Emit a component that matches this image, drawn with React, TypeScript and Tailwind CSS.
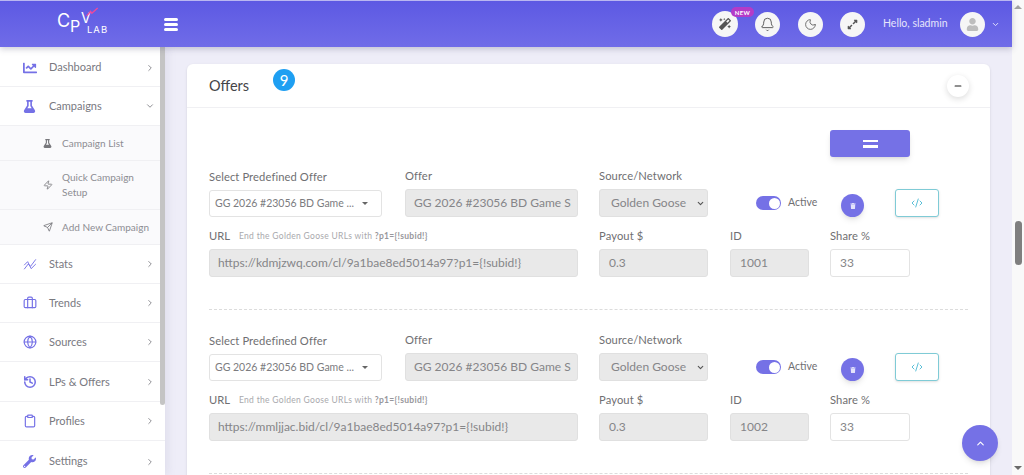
import React from 'react';
import { ChevronRight, ChevronDown, ChevronUp, Bell, Moon, Briefcase, Globe, History, Clipboard, Zap, Send, CodeXml, Minus } from 'lucide-react';
import { FaChartLine, FaFlask, FaWrench, FaMagic, FaExpandAlt, FaUser, FaTrash } from 'react-icons/fa';

const font = "font-['Lato','Noto_Sans',sans-serif]";

const StatsIcon = ({ className }: { className?: string }) => (
    <svg viewBox="0 0 24 24" className={className} fill="none" stroke="currentColor" strokeWidth="1.6">
        <path d="M2 21 L9 12 L13 16 L22 4" />
        <path d="M2 14 L8 8 L14 20 L22 12" />
    </svg>
);

const menuBottom = [
    { label: 'Stats', icon: <StatsIcon className="w-[14px] h-[14px]" />, h: 'h-[39px]' },
    { label: 'Trends', icon: <Briefcase size={14} />, h: 'h-[39px]' },
    { label: 'Sources', icon: <Globe size={14} />, h: 'h-[39px]' },
    { label: 'LPs & Offers', icon: <History size={14} strokeWidth={2.6} />, h: 'h-[40px] pt-px' },
    { label: 'Profiles', icon: <Clipboard size={14} />, h: 'h-[39px]' },
    { label: 'Settings', icon: <FaWrench size={13} />, h: 'h-[40px] pt-[2px]' },
];

const MenuItem = ({ label, icon, open, h }: { label: string; icon: React.ReactNode; open?: boolean; h: string }) => (
    <div className={`${h} shrink-0 flex items-center pl-[23px] pr-[10px] border-b border-[#f0f0f3] text-[#79797f]`}>
        <span className="w-[26px] text-[#7571e6] flex">{icon}</span>
        <span className="text-[11px] flex-1">{label}</span>
        {open ? <ChevronDown size={10} /> : <ChevronRight size={10} />}
    </div>
);

const SubItem = ({ label, icon, h }: { label: string; icon: React.ReactNode; h: string }) => (
    <div className={`${h} flex items-center pl-[43px] pr-2 border-b border-[#f0f0f3] text-[#8d8d93]`}>
        <span className="w-[19px] shrink-0 flex text-[#77777c]">{icon}</span>
        <span className="text-[10px] leading-[15px] w-[90px]">{label}</span>
    </div>
);

const Label = ({ children, className = '' }: { children: React.ReactNode; className?: string }) => (
    <div className={`text-[11.2px] leading-[14px] text-[#6f6f72] tracking-[0.1px] ${className}`}>{children}</div>
);

const Field = ({ value, pad = 'pl-[9px]', off }: { value: string; pad?: string; off?: boolean }) => (
    <div className={`h-[28px] rounded-[3px] border flex items-center overflow-hidden whitespace-nowrap text-[12px] text-[#858588] ${pad} ${off ? 'bg-white border-[#e3e3e3]' : 'bg-[#e9e9e9] border-[#e0e0e0]'}`}>
        {value}
    </div>
);

const OfferBlock = ({ url, id }: { url: string; id: string }) => (
    <div className="flex flex-col">
        <div className="flex">
            <div className="w-[173px] mr-[23px]">
                <Label className="mb-[6px] mt-px">Select Predefined Offer</Label>
                <div className="h-[27px] rounded-[3px] border border-[#e3e3e3] bg-white flex items-center pl-[5px] pr-[13px] text-[10.5px] text-[#7c7c80]">
                    <span className="flex-1 whitespace-nowrap">GG 2026 #23056 BD Game ...</span>
                    <span className="w-0 h-0 border-x-[3px] border-x-transparent border-t-[3px] border-t-[#666]" />
                </div>
            </div>
            <div className="w-[173px] mr-[21px]">
                <Label className="mb-[6px]">Offer</Label>
                <Field value="GG 2026 #23056 BD Game S" pad="pl-[8px]" />
            </div>
            <div className="w-[109px] mr-[48px]">
                <Label className="mb-[6px]">Source/Network</Label>
                <div className="h-[28px] rounded-[3px] border border-[#e0e0e0] bg-[#e9e9e9] flex items-center pl-[11px] pr-[2px] text-[12px] text-[#858588]">
                    <span className="flex-1">Golden Goose</span>
                    <ChevronDown size={9} strokeWidth={3} className="text-[#555]" />
                </div>
            </div>
            <div className="w-[85px] flex items-center h-[28px] mt-[20px]">
                <span className="w-[25px] h-[14px] rounded-full bg-[#7571e6] flex items-center justify-end pr-px mr-[7px]">
                    <span className="w-[11px] h-[11px] rounded-full bg-white" />
                </span>
                <span className="text-[10.5px] text-[#6f6f72]">Active</span>
            </div>
            <div className="w-[54px] mt-[25px]">
                <span className="w-[23px] h-[23px] rounded-full bg-[#7571e6] shadow-md flex items-center justify-center text-[#e4e3fb]">
                    <FaTrash size={6} />
                </span>
            </div>
            <div className="w-[44px] h-[28px] mt-[20px] rounded-[3px] border border-[#7fcbd6] bg-white shadow-sm flex items-center justify-center text-[#5cc0d8]">
                <CodeXml size={12} />
            </div>
        </div>
        <div className="flex mt-[12px]">
            <div className="w-[369px] mr-[21px]">
                <div className="flex items-center h-[14px] mb-[6px]">
                    <span className="text-[11.2px] text-[#6f6f72] mr-[9px]">URL</span>
                    <span className="text-[8.5px] text-[#a9a9ad] tracking-[0.3px]">End the Golden Goose URLs with <b className="text-[#97979b]">?p1={'{!subid!}'}</b></span>
                </div>
                <Field value={url} pad="pl-[8px]" />
            </div>
            <div className="w-[109px] mr-[22px]">
                <Label className="mb-[6px]">Payout $</Label>
                <Field value="0.3" />
            </div>
            <div className="w-[79px] mr-[21px]">
                <Label className="mb-[6px]">ID</Label>
                <Field value={id} />
            </div>
            <div className="w-[80px]">
                <Label className="mb-[6px]">Share %</Label>
                <Field value="33" off />
            </div>
        </div>
    </div>
);

export default function App() {
    return (
        <div className={`${font} relative w-[1024px] h-[475px] overflow-hidden flex bg-[#f9f9f9]`}>
            <div className="w-[1012px] flex flex-col shrink-0">
                {/* Top bar */}
                <div className="h-[47px] shrink-0 flex items-center border-t border-[#b9b7f1] bg-gradient-to-b from-[#5d59e3] to-[#706ce8] shadow-[0_2px_6px_rgba(60,60,90,0.25)] z-10">
                    <div className="relative w-[57px] ml-[57px] h-[36px] text-white font-['Inter',sans-serif]">
                        <span className="absolute left-0 top-[6px] text-[18px] leading-[18px]">C</span>
                        <span className="absolute left-[13px] top-[12px] text-[16px] leading-[16px]">P</span>
                        <span className="absolute left-[24px] top-[4px] text-[14px] leading-[15px]">V</span>
                        <span className="absolute left-[30px] top-[19px] text-[9.5px] leading-[10px] tracking-[1px]">LAB</span>
                        <svg viewBox="0 0 20 16" className="absolute left-[29px] -top-[1px] w-[13px] h-[14px]" fill="none" stroke="#f0489a" strokeWidth="2">
                            <path d="M1 14 L7 7 L9 10 L18 2" />
                        </svg>
                    </div>
                    <div className="ml-[50px] w-[14px] flex flex-col gap-[2px]">
                        <span className="h-[3px] bg-white rounded-sm" />
                        <span className="h-[3px] bg-white rounded-sm" />
                        <span className="h-[3px] bg-white rounded-sm" />
                    </div>
                    <div className="ml-auto flex items-center text-[#555]">
                        <div className="relative w-[26px] h-[26px] rounded-full bg-[#f6f6f6] flex items-center justify-center">
                            <FaMagic size={12} />
                            <span className="absolute left-[19px] -top-[4px] h-[10px] w-[23px] rounded-full bg-[#b43bc8] text-white text-[6px] font-bold flex items-center justify-center tracking-[0.3px]">NEW</span>
                        </div>
                        <div className="ml-[17px] w-[25px] h-[25px] rounded-full bg-[#f6f6f6] flex items-center justify-center"><Bell size={15} strokeWidth={1.5} /></div>
                        <div className="ml-[18px] w-[25px] h-[25px] rounded-full bg-[#f6f6f6] flex items-center justify-center"><Moon size={13} strokeWidth={1.5} /></div>
                        <div className="ml-[17px] w-[25px] h-[25px] rounded-full bg-[#f6f6f6] flex items-center justify-center"><FaExpandAlt size={11} /></div>
                        <span className="ml-[18px] text-[10.5px] text-[#e6e5fb] w-[65px] whitespace-nowrap">Hello, sladmin</span>
                        <div className="ml-[12px] w-[25px] h-[25px] rounded-full bg-[#f6f6f6] flex items-center justify-center text-[#bdbdbd]"><FaUser size={13} /></div>
                        <ChevronDown size={9} strokeWidth={2.5} className="ml-[6px] mr-[12px] text-[#e6e5fb]" />
                    </div>
                </div>

                <div className="flex flex-1 min-h-0">
                    {/* Sidebar */}
                    <div className="relative w-[165px] shrink-0 bg-white flex flex-col overflow-hidden shadow-[3px_0_8px_rgba(120,120,160,0.12)]">
                        <MenuItem label="Dashboard" icon={<FaChartLine size={14} />} h="h-[40px] pt-[2px]" />
                        <MenuItem label="Campaigns" icon={<FaFlask size={13} />} open h="h-[39px]" />
                        <div className="bg-[#fafafc] shrink-0">
                            <SubItem label="Campaign List" icon={<FaFlask size={9} />} h="h-[35px]" />
                            <SubItem label="Quick Campaign Setup" icon={<Zap size={10} />} h="h-[49px]" />
                            <SubItem label="Add New Campaign" icon={<Send size={10} />} h="h-[35px]" />
                        </div>
                        {menuBottom.map((m) => (
                            <MenuItem key={m.label} label={m.label} icon={m.icon} h={m.h} />
                        ))}
                        <div className="absolute right-0 top-0 w-[5px] h-[358px] bg-[#c4c4c4] rounded-b-sm" />
                    </div>

                    {/* Content */}
                    <div className="flex-1 min-w-0 bg-[#eeedf8] pl-[22px] pr-[22px] pt-[17px] overflow-hidden">
                        <div className="bg-white rounded-t-[6px] shadow-sm">
                            <div className="relative h-[44px] flex items-center pl-[22px] pr-[21px] border-b border-[#f0f0f3]">
                                <span className="text-[14.5px] text-[#444448] mt-[1px]">Offers</span>
                                <span className="absolute left-[86px] top-[5px] w-[22px] h-[22px] rounded-full bg-[#1e9ff2] text-white text-[15px] flex items-center justify-center">9</span>
                                <span className="ml-auto w-[22px] h-[22px] rounded-full bg-white shadow-[0_2px_6px_rgba(0,0,0,0.14)] flex items-center justify-center text-[#222]"><Minus size={10} strokeWidth={2.5} /></span>
                            </div>
                            <div className="pl-[22px] pr-[22px] pt-[22px] pb-[20px] flex flex-col">
                                <div className="ml-[621px] w-[80px] h-[27px] rounded-[3px] bg-[#7571e6] shadow-md flex flex-col items-center justify-center gap-[3px] mb-[12px]">
                                    <span className="w-[15px] h-[2.5px] bg-white" />
                                    <span className="w-[15px] h-[2.5px] bg-white" />
                                </div>
                                <OfferBlock url="https://kdmjzwq.com/cl/9a1bae8ed5014a97?p1={!subid!}" id="1001" />
                                <div className="border-t border-dashed border-[#dcdcdc] mt-[32px] mb-[23px]" />
                                <OfferBlock url="https://mmljjac.bid/cl/9a1bae8ed5014a97?p1={!subid!}" id="1002" />
                                <div className="border-t border-dashed border-[#dcdcdc] mt-[32px]" />
                            </div>
                        </div>
                    </div>
                </div>
            </div>

            {/* Page scrollbar */}
            <div className="flex-1 flex flex-col items-center justify-between py-[5px]">
                <span className="w-0 h-0 border-x-[4px] border-x-transparent border-b-[4px] border-b-[#a3a3a3]" />
                <span className="w-[7px] h-[44px] rounded-full bg-[#7f7f7f] mt-[32px] mb-auto ml-[1px] translate-y-[180px]" />
                <span className="w-0 h-0 border-x-[4px] border-x-transparent border-t-[4px] border-t-[#6a6a6a]" />
            </div>

            <div className="absolute left-[962px] top-[425px] w-[36px] h-[36px] rounded-full bg-[#7571e6] shadow-md flex items-center justify-center text-white">
                <ChevronUp size={11} strokeWidth={2.5} />
            </div>
        </div>
    );
}
